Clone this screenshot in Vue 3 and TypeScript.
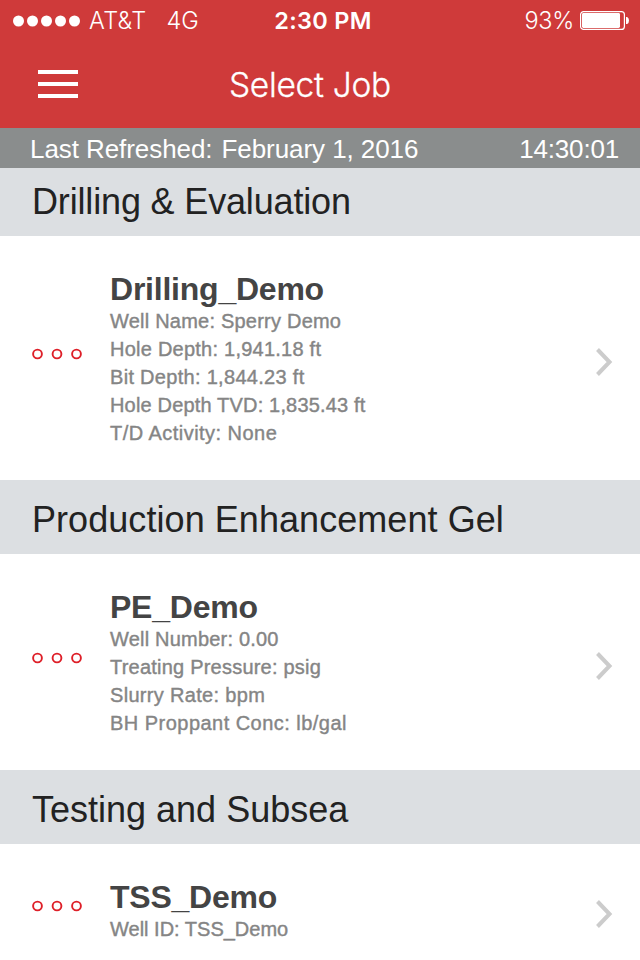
<script setup lang="ts">
interface Detail {
  text: string
  tracking: number
}

interface Job {
  name: string
  details: Detail[]
}

interface Section {
  id: string
  title: string
  job: Job
}

const sections: Section[] = [
  {
    id: 'drilling',
    title: 'Drilling & Evaluation',
    job: {
      name: 'Drilling_Demo',
      details: [
        { text: 'Well Name: Sperry Demo', tracking: 0.22 },
        { text: 'Hole Depth: 1,941.18 ft', tracking: 0.24 },
        { text: 'Bit Depth: 1,844.23 ft', tracking: 0.3 },
        { text: 'Hole Depth TVD: 1,835.43 ft', tracking: 0.17 },
        { text: 'T/D Activity: None', tracking: 0.46 },
      ],
    },
  },
  {
    id: 'production',
    title: 'Production Enhancement Gel',
    job: {
      name: 'PE_Demo',
      details: [
        { text: 'Well Number: 0.00', tracking: 0.2 },
        { text: 'Treating Pressure: psig', tracking: 0.22 },
        { text: 'Slurry Rate: bpm', tracking: 0.32 },
        { text: 'BH Proppant Conc: lb/gal', tracking: 0.47 },
      ],
    },
  },
  {
    id: 'testing',
    title: 'Testing and Subsea',
    job: { name: 'TSS_Demo', details: [{ text: 'Well ID: TSS_Demo', tracking: 0 }] },
  },
]
</script>

<template>
  <div class="screen">
    <header class="top">
      <div class="status">
        <div class="carrier">
          <svg class="signal" width="68" height="12" viewBox="0 0 68 12">
            <circle v-for="n in 5" :key="n" :cx="14 * n - 8.5" cy="6" r="5.5" />
          </svg>
          <span class="network">AT&amp;T</span>
          <span class="radio">4G</span>
        </div>
        <span class="clock">2:30 PM</span>
        <div class="power">
          <span class="percent">93%</span>
          <svg class="battery" width="50" height="20" viewBox="0 0 50 20">
            <rect x="0.6" y="0.6" width="43.8" height="17.8" rx="3" class="battery-shell" />
            <rect x="2" y="2" width="38" height="15" rx="1.4" />
            <path d="M46 6h1.2q1.8 1 1.8 3.5T47.200 13H46z" />
          </svg>
        </div>
      </div>
      <nav class="nav">
        <button class="menu" aria-label="Menu">
          <span class="bar"></span>
          <span class="bar"></span>
          <span class="bar"></span>
        </button>
        <h1 class="heading">Select Job</h1>
      </nav>
    </header>

    <div class="refreshed">
      <div class="refreshed-date">
        <span class="refreshed-label">Last Refreshed:</span>
        <span class="date">February 1, 2016</span>
      </div>
      <span class="time">14:30:01</span>
    </div>

    <section v-for="section in sections" :key="section.id" class="section" :class="section.id">
      <h2 class="section-title">{{ section.title }}</h2>
      <div class="job">
        <svg class="dots" width="52" height="12" viewBox="0 0 52 12">
          <circle v-for="n in 3" :key="n" :cx="19.5 * n - 14" cy="6" r="4.4" />
        </svg>
        <div class="info">
          <h3 class="name">{{ section.job.name }}</h3>
          <p
            v-for="line in section.job.details"
            :key="line.text"
            class="detail"
            :style="{ letterSpacing: line.tracking + 'px' }"
          >{{ line.text }}</p>
        </div>
        <svg class="chevron" width="18" height="30" viewBox="0 0 18 30">
          <path d="M1.500 2.500L13.500 15L1.500 27.500" />
        </svg>
      </div>
    </section>
  </div>
</template>

<style>
body {
  margin: 0;
  background: #fff;
}
</style>

<style scoped>
.screen {
  width: 640px;
  height: 960px;
  overflow: hidden;
  background: #fff;
  font-family: "Liberation Sans", Arial, sans-serif;
}
h1, h2, h3, p {
  margin: 0;
}
.top {
  height: 128px;
  background: #cf3a3a;
  color: #fff;
  font-family: Inter, sans-serif;
}
.status {
  display: grid;
  grid-template-columns: 1fr auto 1fr;
  align-items: center;
  height: 40px;
  padding: 0 10px 0 13px;
  font-size: 23.5px;
  line-height: 38px;
}
.carrier,
.power {
  display: flex;
  align-items: center;
  white-space: nowrap;
}
.power {
  justify-content: flex-end;
}
.signal {
  margin-top: 1px;
  fill: #fff;
}
.network,
.radio,
.percent,
.clock {
  padding-top: 2px;
}
.network {
  margin-left: 8px;
  font-weight: 300;
  letter-spacing: 0.3px;
}
.radio {
  margin-left: 20px;
  font-weight: 300;
}
.clock {
  padding-left: 3px;
  font-weight: 600;
  letter-spacing: 0.3px;
}
.percent {
  margin-right: 6px;
  font-weight: 300;
  letter-spacing: -0.3px;
}
.battery {
  margin-top: 2px;
  fill: #fff;
}
.battery-shell {
  fill: none;
  stroke: #fff;
  stroke-width: 1.2;
}
.nav {
  display: grid;
  grid-template-columns: 78px 1fr 98px;
  align-items: center;
  height: 88px;
}
.menu {
  display: flex;
  flex-direction: column;
  gap: 8px;
  width: 40px;
  margin: 0 0 0 38px;
  padding: 0;
  border: 0;
  background: none;
}
.bar {
  height: 4px;
  background: #fff;
}
.heading {
  padding-top: 1px;
  font-size: 33.5px;
  line-height: 40px;
  font-weight: 300;
  letter-spacing: -0.3px;
  -webkit-text-stroke: 0.3px #fff;
  text-align: center;
}
.refreshed {
  display: flex;
  justify-content: space-between;
  height: 40px;
  padding: 0 21px 0 30px;
  background: #8a8d8d;
  color: #fff;
  font-size: 26px;
  line-height: 43px;
}
.refreshed-label,
.date {
  letter-spacing: -0.07px;
}
.date {
  margin-left: 9px;
}
.time {
  letter-spacing: -0.18px;
}
.section-title {
  height: 68px;
  padding-left: 32px;
  background: #dcdfe2;
  color: #222;
  font-size: 36px;
  font-weight: 400;
  line-height: 68px;
}
.section + .section .section-title {
  padding-top: 6px;
}
.drilling .section-title {
  letter-spacing: -0.16px;
}
.production .section-title {
  letter-spacing: 0.06px;
}
.job {
  display: grid;
  grid-template-columns: 52px 1fr 18px;
  align-items: center;
  column-gap: 26px;
  padding: 35px 26px 33px 32px;
}
.dots {
  margin-top: -10px;
  fill: none;
  stroke: #de1f28;
  stroke-width: 1.9;
}
.name {
  color: #444;
  font-size: 32px;
  font-weight: 700;
  line-height: 36px;
  letter-spacing: -0.23px;
}
.detail {
  color: #858585;
  -webkit-text-stroke: 0.4px #858585;
  font-size: 20px;
  line-height: 28px;
}
.chevron {
  margin-top: 6px;
  fill: none;
  stroke: #ccc;
  stroke-width: 4;
}
</style>
